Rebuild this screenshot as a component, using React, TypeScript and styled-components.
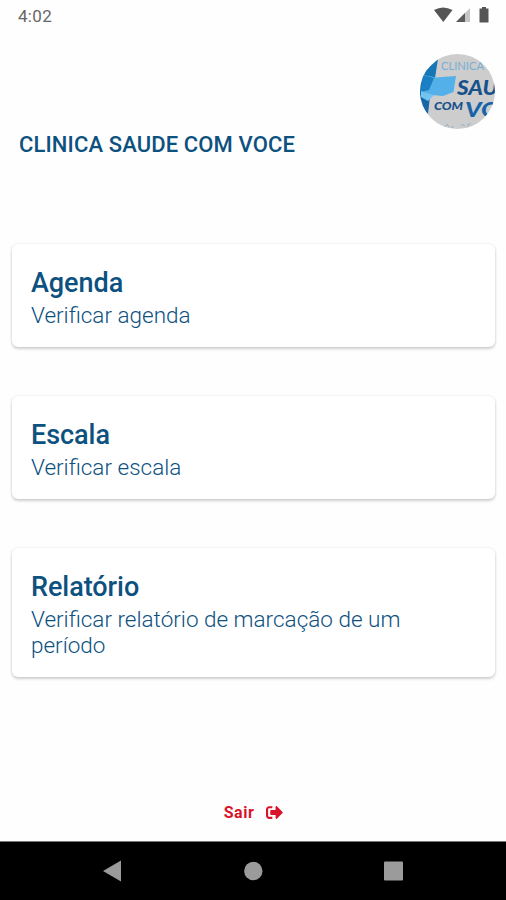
import React from "react";
import styled, { createGlobalStyle } from "styled-components";
import { FaSignOutAlt } from "react-icons/fa";

const GlobalStyle = createGlobalStyle`
  * { box-sizing: border-box; }
  body { margin: 0; background: #fefefe; }
`;

const Screen = styled.div`
  width: 506px;
  height: 900px;
  display: flex;
  flex-direction: column;
  overflow: hidden;
  background: #fefefe;
  color: #0d517f;
  font-family: Roboto, sans-serif;
`;

const StatusBar = styled.div`
  height: 32px;
  flex: none;
  display: flex;
  justify-content: space-between;
  padding: 0 14px 0 18px;
`;

const Clock = styled.span`
  font-size: 17px;
  line-height: 32px;
  letter-spacing: 0.3px;
  color: #666;
`;

const StatusIcons = styled.svg`
  display: block;
  width: 60px;
  height: 32px;
`;

const Header = styled.header`
  height: 212px;
  flex: none;
  display: flex;
  flex-direction: column;
  padding: 22px 11px 0 19px;
`;

const Avatar = styled.svg`
  display: block;
  width: 75px;
  height: 75px;
  align-self: flex-end;
`;

const ClinicName = styled.h1`
  margin: 3px 0 0;
  font-size: 22px;
  line-height: 26px;
  font-weight: 500;
  letter-spacing: 0.12px;
  white-space: nowrap;
`;

const Menu = styled.main`
  display: flex;
  flex-direction: column;
  gap: 49px;
  padding: 0 11px 0 12px;
`;

const Card = styled.section<{ $tall?: boolean }>`
  height: ${(p) => (p.$tall ? 129 : 103)}px;
  padding: 23px 19px 0;
  border-radius: 6px;
  background: #fff;
  box-shadow: 0 2px 3px rgba(0, 0, 0, 0.17), 0 0 3px rgba(0, 0, 0, 0.1);
`;

const CardTitle = styled.h2`
  margin: 0;
  font-size: 27px;
  line-height: 32px;
  font-weight: 500;
  letter-spacing: -0.05px;
`;

const CardText = styled.p`
  margin: 3px 0 0;
  font-size: 22.5px;
  line-height: 26px;
  font-weight: 300;
  letter-spacing: 0;
`;

const Logout = styled.button`
  margin: 124px auto 0;
  padding: 0 0 0 1px;
  height: 24px;
  border: 0;
  background: none;
  display: flex;
  align-items: center;
  gap: 12px;
  color: #d9142a;
  font: 700 16px/24px Roboto, sans-serif;
  letter-spacing: 0.5px;

  svg {
    margin-bottom: 2px;
  }
`;

const NavBar = styled.nav`
  height: 59px;
  flex: none;
  margin-top: auto;
  border-top: 1px solid #777;
  background: #000;
`;

const NavIcons = styled.svg`
  display: block;
  width: 506px;
  height: 58px;
`;

const items = [
  { title: "Agenda", text: "Verificar agenda" },
  { title: "Escala", text: "Verificar escala" },
  { title: "Relatório", text: "Verificar relatório de marcação de um período", tall: true },
];

function ClinicLogo() {
  return (
    <Avatar viewBox="0 0 75 75" role="img" aria-label="Clinica Saude com Voce">
      <defs>
        <clipPath id="avatar-circle"><circle cx="37.5" cy="37.5" r="37.5" /></clipPath>
      </defs>
      <g clipPath="url(#avatar-circle)" fontFamily="Lato, sans-serif">
        <rect width="75" height="75" fill="#cdcdcd" />
        <path d="M0 22L18 5 15 24 10 41 0 41Z" fill="#1676b6" />
        <path d="M0 38L10 42 8 60 0 52Z" fill="#1766a8" />
        <path d="M4 21L16 23.500 36 22 33.500 38 23 42 11 41 2 37Z" fill="#53b0e8" />
        <path d="M3 21L14 24 9 36 1 38Z" fill="#1b80c3" />
        <path d="M1 37L14 41 8 47 1 43Z" fill="#72c4f0" />
        <text x="21" y="16" fontSize="12" fill="#77afd4" textLength="43" lengthAdjust="spacingAndGlyphs">CLINICA</text>
        <g fontWeight="900" fontStyle="italic" fill="#17518c">
          <text x="37" y="40.500" fontSize="21" textLength="41" lengthAdjust="spacingAndGlyphs">SAU</text>
          <text x="14" y="55.500" fontSize="11.500" textLength="29" lengthAdjust="spacingAndGlyphs">COM</text>
          <text x="45" y="63" fontSize="21.500" fill="#1763a7" textLength="35" lengthAdjust="spacingAndGlyphs">VO</text>
        </g>
        <path d="M25 73l2-3 2 3M31 73h3M41 72q2-3 4 0M48 73v-3h3" fill="none" stroke="#93b3cb" />
      </g>
    </Avatar>
  );
}

export default function App() {
  return (
    <>
      <GlobalStyle />
      <Screen>
        <StatusBar>
          <Clock>4:02</Clock>
          <StatusIcons viewBox="432 0 60 32" aria-hidden="true">
            <path d="M434 10Q443 5 452.500 10L443.300 22Z" fill="#555" />
            <path d="M470 8V22H456Z" fill="#c6c6c6" />
            <path d="M465 13V22H456Z" fill="#5b5b5b" />
            <path d="M482 7H486V8.500H488.500V22.500H479.500V8.500H482Z" fill="#555" />
          </StatusIcons>
        </StatusBar>
        <Header>
          <ClinicLogo />
          <ClinicName>CLINICA SAUDE COM VOCE</ClinicName>
        </Header>
        <Menu>
          {items.map((item) => (
            <Card key={item.title} $tall={item.tall}>
              <CardTitle>{item.title}</CardTitle>
              <CardText>{item.text}</CardText>
            </Card>
          ))}
        </Menu>
        <Logout>
          Sair
          <FaSignOutAlt size={17} />
        </Logout>
        <NavBar>
          <NavIcons viewBox="0 842 506 58" aria-hidden="true">
            <g fill="#9b9b9b">
              <path d="M103 871L121 860.500V881.500Z" />
              <circle cx="253.300" cy="871" r="9.200" />
              <rect x="384" y="861.500" width="19" height="19" rx="1" />
            </g>
          </NavIcons>
        </NavBar>
      </Screen>
    </>
  );
}
